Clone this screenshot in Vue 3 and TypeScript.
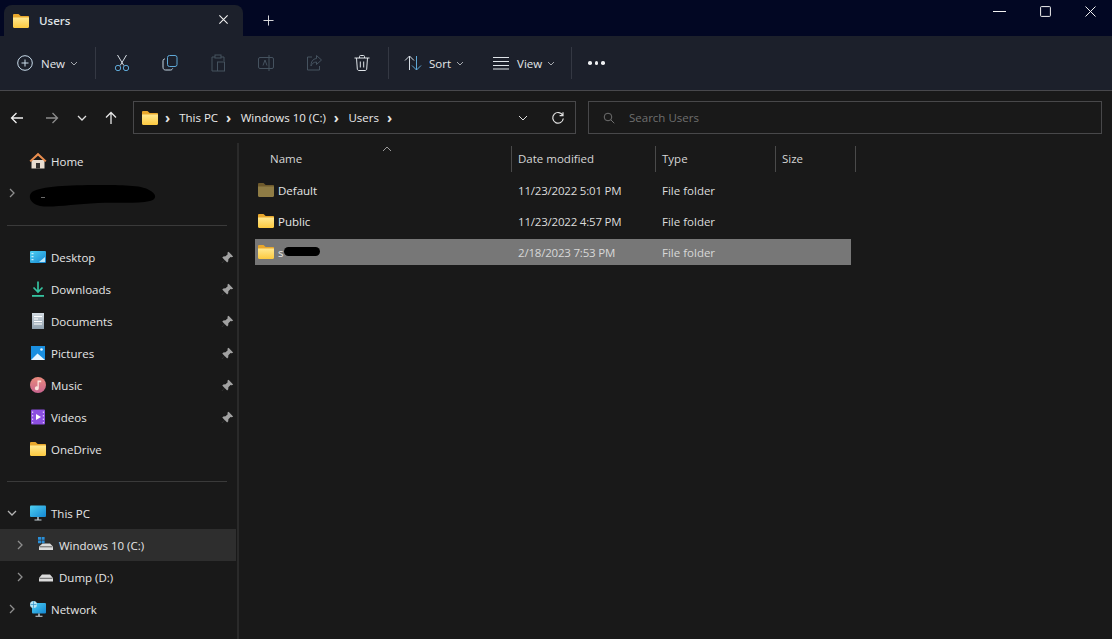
<script setup lang="ts">
interface NavItem {
  label: string;
  icon: string;
  pinned?: boolean;
  chevron?: 'right' | 'down';
  nested?: boolean;
  active?: boolean;
  divider?: boolean;
  redacted?: boolean;
}

interface FileRow {
  name: string;
  modified: string;
  type: string;
  icon: string;
  selected?: boolean;
}

const quickAccess: NavItem[] = [
  { label: 'Home', icon: 'home' },
  { label: '', icon: '', chevron: 'right', redacted: true },
  { label: '', icon: '', divider: true },
  { label: 'Desktop', icon: 'desktop', pinned: true },
  { label: 'Downloads', icon: 'downloads', pinned: true },
  { label: 'Documents', icon: 'documents', pinned: true },
  { label: 'Pictures', icon: 'pictures', pinned: true },
  { label: 'Music', icon: 'music', pinned: true },
  { label: 'Videos', icon: 'videos', pinned: true },
  { label: 'OneDrive', icon: 'folder' },
  { label: '', icon: '', divider: true },
  { label: 'This PC', icon: 'pc', chevron: 'down' },
  { label: 'Windows 10 (C:)', icon: 'drive-c', chevron: 'right', nested: true, active: true },
  { label: 'Dump (D:)', icon: 'drive', chevron: 'right', nested: true },
  { label: 'Network', icon: 'network', chevron: 'right' },
];

const files: FileRow[] = [
  { name: 'Default', modified: '11/23/2022 5:01 PM', type: 'File folder', icon: 'folder-dim' },
  { name: 'Public', modified: '11/23/2022 4:57 PM', type: 'File folder', icon: 'folder' },
  { name: 's', modified: '2/18/2023 7:53 PM', type: 'File folder', icon: 'folder', selected: true },
];

const crumbs = ['This PC', 'Windows 10 (C:)', 'Users'];
</script>

<template>
  <div class="explorer">
    <svg class="sprite" aria-hidden="true">
      <defs>
        <linearGradient id="folder-front" x1="0" y1="0" x2="0" y2="1">
          <stop offset="0" stop-color="#ffe88f" />
          <stop offset="1" stop-color="#fcc93f" />
        </linearGradient>
        <linearGradient id="screen" x1="0" y1="0" x2="1" y2="1">
          <stop offset="0" stop-color="#4fd0f2" />
          <stop offset="1" stop-color="#1386d2" />
        </linearGradient>
        <linearGradient id="doc" x1="0" y1="0" x2="0" y2="1">
          <stop offset="0" stop-color="#d3dbe2" />
          <stop offset="1" stop-color="#8fa0ad" />
        </linearGradient>
        <linearGradient id="music" x1="0" y1="0" x2="0" y2="1">
          <stop offset="0" stop-color="#e98a7c" />
          <stop offset="1" stop-color="#c9658f" />
        </linearGradient>
      </defs>
      <symbol id="i-folder" viewBox="0 0 18 16">
        <path d="M1 2.200C1 1.500 1.500 1 2.200 1h4.300l2.200 2H16c.6 0 1 .4 1 1v2H1z" fill="#e8a72c" />
        <path d="M1 4.600h15.900c.1 0 .1 0 .1.1v9.100c0 .7-.5 1.200-1.200 1.200H2.200C1.500 15 1 14.500 1 13.800z" fill="url(#folder-front)" />
      </symbol>
      <symbol id="i-folder-dim" viewBox="0 0 18 16">
        <path d="M1 2.200C1 1.500 1.500 1 2.200 1h4.300l2.200 2H16c.6 0 1 .4 1 1v2H1z" fill="#6e5a2c" />
        <path d="M1 4.600h16v9.200c0 .7-.5 1.200-1.200 1.200H2.200C1.500 15 1 14.500 1 13.800z" fill="#8f7c45" />
      </symbol>
      <symbol id="i-home" viewBox="0 0 18 18">
        <path d="M2.500 8h13v8.500h-13z" fill="#e9ddd0" />
        <path d="M9 .8 .5 8.800l1.400 1.300L9 3.800l7.100 6.300 1.400-1.300z" fill="#e98d4e" />
        <path d="M7 11h4v5.500H7z" fill="#33302e" />
      </symbol>
      <symbol id="i-desktop" viewBox="0 0 18 16">
        <rect x="1" y="2" width="16" height="12" rx="1" fill="url(#screen)" />
        <path d="M2.500 4h2v1.200h-2zM2.500 7h2v1.200h-2zM2.500 10h2v1.200h-2zM10 13l6-5v5z" fill="#d7f5ff" opacity=".85" />
      </symbol>
      <symbol id="i-downloads" viewBox="0 0 18 18">
        <path d="M9 1.500v10M4.500 7.500 9 12l4.500-4.500" fill="none" stroke="#35c2a0" stroke-width="1.700" />
        <rect x="3" y="15" width="12" height="1.800" fill="#35c2a0" />
      </symbol>
      <symbol id="i-documents" viewBox="0 0 18 18">
        <rect x="3" y="1" width="12" height="16" fill="url(#doc)" />
        <path d="M5 4.500h8M5 7h4M5 9.500h8M5 12h8" stroke="#fff" stroke-width="1.100" />
      </symbol>
      <symbol id="i-pictures" viewBox="0 0 18 18">
        <rect x="2" y="2" width="14" height="14" fill="#1a8fe0" />
        <path d="M2 16 8.500 9.500 16 16z" fill="#e8f6ff" />
        <circle cx="12.500" cy="5.500" r="1.300" fill="#e8f6ff" />
      </symbol>
      <symbol id="i-music" viewBox="0 0 18 18">
        <circle cx="9" cy="9" r="8" fill="url(#music)" />
        <path d="M8.500 4.500h3.700v1.800H9.800v6a2 2 0 1 1-1.300-1.900z" fill="#fbe3dc" />
      </symbol>
      <symbol id="i-videos" viewBox="0 0 18 18">
        <rect x="2" y="1.500" width="14" height="15" rx="1" fill="#8c4fe0" />
        <path d="M7 6v6l5-3z" fill="#fff" />
        <path d="M3 3.500h1.200v1.500H3zM3 7h1.200v1.500H3zM3 10.500h1.200V12H3zM3 14h1.200v1.200H3zM13.800 3.500H15v1.500h-1.200zM13.800 7H15v1.500h-1.200zM13.800 10.500H15V12h-1.200zM13.800 14H15v1.200h-1.200z" fill="#d9c3fa" />
      </symbol>
      <symbol id="i-pc" viewBox="0 0 18 18">
        <rect x="1" y="1.500" width="16" height="11.500" rx="1" fill="url(#screen)" />
        <path d="M8.300 13h1.400v2.500H8.300zM5.500 15.500h7v1h-7z" fill="#c8d4da" />
      </symbol>
      <symbol id="i-network" viewBox="0 0 18 18">
        <rect x="3" y="3" width="14" height="10.500" rx="1" fill="url(#screen)" />
        <path d="M9.300 13.500h1.400v2.300H9.300zM6.500 15.800h7v1h-7z" fill="#c8d4da" />
        <circle cx="4.500" cy="4.500" r="3.500" fill="#b6e6f5" />
        <path d="M1.500 4.500h6M4.500 1.200v6.600" stroke="#2c8fc5" stroke-width=".7" />
      </symbol>
      <symbol id="i-drive" viewBox="0 0 18 18">
        <path d="M5 6.500h8l3 3.500v3.500H2V10z" fill="#dcdcdc" />
        <path d="M2.500 10.300h13" stroke="#444" stroke-width=".8" />
      </symbol>
      <symbol id="i-drive-c" viewBox="0 0 18 18">
        <path d="M5.500 7.500h7.500l3 3v3.500H2v-3.500z" fill="#dcdcdc" />
        <path d="M2.500 10.800h13" stroke="#444" stroke-width=".8" />
        <path d="M1 1h3v2.800H1zM4.600 1h3v2.800h-3zM1 4.400h3v2.800H1zM4.600 4.400h3v2.800h-3z" fill="#2a8fd8" />
      </symbol>
      <symbol id="i-pin" viewBox="0 0 12 12">
        <path d="M7 .8 11.200 5 10 5.800 8.800 5.500 6.800 7.500 6.700 9.500 5.700 10.500 3.400 8.200.9 11.100.7 11l2.600-2.800L1.200 6l1-1 2-.1 2-2-.3-1.200z" fill="#a2a2a2" />
      </symbol>
    </svg>

    <header class="titlebar">
      <div class="tab">
        <svg class="ico-17"><use href="#i-folder" /></svg>
        <span class="tab-title">Users</span>
        <svg class="tab-close" viewBox="0 0 12 12">
          <path d="M1.500 1.500l9 9M10.500 1.500l-9 9" />
        </svg>
      </div>
      <svg class="new-tab" viewBox="0 0 12 12"><path d="M6 .5v11M.5 6h11" /></svg>
      <div class="window-controls">
        <svg class="win-min" viewBox="0 0 13 11"><path d="M0 5.500h13" /></svg>
        <svg viewBox="0 0 11 11"><rect x=".6" y=".6" width="9.800" height="9.800" rx=".8" /></svg>
        <svg viewBox="0 0 11 11"><path d="M.5.5l10 10M10.500.5l-10 10" /></svg>
      </div>
    </header>

    <div class="toolbar">
      <button type="button" class="tool tool-new">
        <svg class="tool-ico" viewBox="0 0 20 20">
          <circle cx="10" cy="10" r="7.300" stroke="#c9dcec" />
          <path d="M10 6.500v7M6.500 10h7" stroke="#c9dcec" />
        </svg>
        <span>New</span>
        <svg class="caret" viewBox="0 0 8 5"><path d="M1 1l3 3 3-3" /></svg>
      </button>
      <i class="sep sep-new"></i>
      <svg class="tool-ico cmd" viewBox="0 0 20 20">
        <path d="M5.500 2 11.800 12.500M14.500 2 8.200 12.500" stroke="#d6dde4" />
        <circle cx="6" cy="15" r="2.700" stroke="#5fa9d8" />
        <circle cx="14" cy="15" r="2.700" stroke="#5fa9d8" />
      </svg>
      <svg class="tool-ico cmd" viewBox="0 0 20 20">
        <rect x="7.500" y="2.500" width="9.500" height="11" rx="2" stroke="#5fa9d8" />
        <path d="M5 6H4.500A1.800 1.800 0 0 0 3 7.800v6.400C3 16.200 4.300 17 5.500 17h5c1.300 0 2-.9 2.200-1.700" stroke="#c4d6e4" />
      </svg>
      <svg class="tool-ico cmd" viewBox="0 0 20 20">
        <path d="M7 4H4v14h5M13 4h3v4" stroke="#45525f" />
        <rect x="7" y="2" width="6" height="3" stroke="#45525f" />
        <rect x="9.500" y="9" width="7" height="9" stroke="#45525f" />
      </svg>
      <svg class="tool-ico cmd" viewBox="0 0 20 20">
        <rect x="2.500" y="4.500" width="15" height="11" rx="1.500" stroke="#45525f" />
        <path d="M13 2v16M7 12.500l2-5.500 2 5.500" stroke="#45525f" />
      </svg>
      <svg class="tool-ico cmd" viewBox="0 0 20 20">
        <path d="M8 4H3.500v13h12v-4" stroke="#45525f" />
        <path d="M12.500 2.500 17.500 7l-5 4.500V9C9 9 8 11 7 13c0-4 1.500-7 5.500-7.500z" stroke="#45525f" />
      </svg>
      <svg class="tool-ico cmd-last" viewBox="0 0 20 20">
        <path d="M2.500 5h15M7.500 5V3.500c0-.6.4-1 1-1h3c.6 0 1 .4 1 1V5M4.500 5l.8 11c.1 1 .8 1.500 1.700 1.500h6c.9 0 1.600-.5 1.700-1.500l.8-11M8.300 8.500v6M11.700 8.500v6" stroke="#dfe4e9" />
      </svg>
      <i class="sep sep-delete"></i>
      <button type="button" class="tool tool-sort">
        <svg class="tool-ico" viewBox="0 0 20 20">
          <path d="M6.500 17V3M2 7.500l4.500-4.500L11 7.500" stroke="#d6dde4" />
          <path d="M13.500 3v14M9 12.500l4.500 4.500 4.500-4.500" stroke="#5fa9d8" />
        </svg>
        <span>Sort</span>
        <svg class="caret" viewBox="0 0 8 5"><path d="M1 1l3 3 3-3" /></svg>
      </button>
      <button type="button" class="tool tool-view">
        <svg class="tool-ico" viewBox="0 0 20 20">
          <path d="M2 4.500h16M2 8.500h16M2 12.500h16M2 16h16" stroke="#dfe4e9" />
        </svg>
        <span>View</span>
        <svg class="caret" viewBox="0 0 8 5"><path d="M1 1l3 3 3-3" /></svg>
      </button>
      <i class="sep sep-view"></i>
      <div class="more"><b></b><b></b><b></b></div>
    </div>

    <div class="navbar">
      <svg class="nav-ico back" viewBox="0 0 14 14"><path d="M13 7H1.500M6.500 2 1.500 7l5 5" /></svg>
      <svg class="nav-ico fwd" viewBox="0 0 14 14"><path d="M1 7h11.500M7.500 2l5 5-5 5" /></svg>
      <svg class="nav-ico recent" viewBox="0 0 10 6"><path d="M1 1l4 4 4-4" /></svg>
      <svg class="nav-ico up" viewBox="0 0 14 14"><path d="M7 13V1.500M2 6.500l5-5 5 5" /></svg>

      <div class="address">
        <svg class="ico-17"><use href="#i-folder" /></svg>
        <span class="crumb-gt first">›</span>
        <template v-for="crumb in crumbs" :key="crumb">
          <span class="crumb">{{ crumb }}</span>
          <span class="crumb-gt">›</span>
        </template>
        <svg class="addr-caret" viewBox="0 0 10 6"><path d="M1 1l4 4 4-4" /></svg>
        <svg class="refresh" viewBox="0 0 14 14">
          <path d="M11.800 4.500A5.300 5.300 0 1 0 12.300 7.500M12 1.200v3.500H8.600" />
        </svg>
      </div>

      <div class="search">
        <svg class="search-ico" viewBox="0 0 12 12">
          <circle cx="5" cy="5" r="3.800" />
          <path d="M7.800 7.800l3.500 3.500" />
        </svg>
        <span>Search Users</span>
      </div>
    </div>

    <div class="body">
      <nav class="sidebar">
        <template v-for="(item, i) in quickAccess" :key="i">
          <hr v-if="item.divider" class="nav-divider" />
          <div v-else class="nav-row" :class="{ nested: item.nested, active: item.active }">
            <svg v-if="item.chevron === 'right'" class="nav-chevron" viewBox="0 0 6 10">
              <path d="M1 1l4 4-4 4" />
            </svg>
            <svg v-if="item.chevron === 'down'" class="nav-chevron-down" viewBox="0 0 10 6">
              <path d="M1 1l4 4 4-4" />
            </svg>
            <svg v-if="item.icon" class="nav-icon"><use :href="'#i-' + item.icon" /></svg>
            <span class="nav-label">{{ item.label }}</span>
            <svg v-if="item.pinned" class="pin"><use href="#i-pin" /></svg>
            <svg v-if="item.redacted" class="blob" viewBox="0 0 128 24">
              <path d="M3 8C12 2 40 1 70 1c22 0 42 0 50 5 8 4 8 9 1 11-14 3-34 1-52 2-24 1-46 5-58 3C2 20-2 13 3 8z" fill="#000" />
              <path d="M12 13.500h4" stroke="#6a6a6a" stroke-width="1" />
            </svg>
          </div>
        </template>
      </nav>

      <main class="files">
        <svg class="sort-arrow" viewBox="0 0 10 6"><path d="M1 5l4-4 4 4" /></svg>
        <div class="col-head">
          <span class="col">Name</span>
          <span class="col">Date modified</span>
          <span class="col">Type</span>
          <span class="col">Size</span>
        </div>
        <div class="file-list">
          <div v-for="file in files" :key="file.modified" class="file-row" :class="{ selected: file.selected }">
            <div class="file-name">
              <svg class="file-icon"><use :href="'#i-' + file.icon" /></svg>
              <span>{{ file.name }}</span>
              <i v-if="file.selected" class="scribble"></i>
            </div>
            <span class="file-date">{{ file.modified }}</span>
            <span class="file-type">{{ file.type }}</span>
          </div>
        </div>
      </main>
    </div>
  </div>
</template>

<style scoped>
.explorer {
  width: 1112px;
  height: 639px;
  display: flex;
  flex-direction: column;
  overflow: hidden;
  background: #191919;
  color: #e4e4e4;
  font-family: 'Open Sans', 'Noto Sans', sans-serif;
  font-size: 11.500px;
  position: relative;
}

.sprite {
  position: absolute;
  width: 0;
  height: 0;
}

.titlebar {
  height: 36px;
  flex: none;
  display: flex;
  align-items: flex-end;
  background: #020723;
  padding-left: 4px;
}

.tab {
  width: 239px;
  height: 31px;
  background: #1c202b;
  border-radius: 8px 8px 0 0;
  display: flex;
  align-items: center;
  padding: 0 14px 0 8px;
  box-sizing: border-box;
}

.ico-17 {
  width: 18px;
  height: 16px;
  flex: none;
}

.tab-title {
  margin-left: 9px;
  font-weight: 600;
  color: #dfe2e6;
  flex: 1;
}

.tab-close {
  width: 11px;
  height: 11px;
  fill: none;
  stroke: #f0f0f0;
  stroke-width: 1.200;
  margin-bottom: 2px;
}

.new-tab {
  width: 11px;
  height: 11px;
  margin: 0 0 10px 20px;
  fill: none;
  stroke: #e8e8e8;
  stroke-width: 1;
}

.window-controls {
  margin-left: auto;
  align-self: flex-start;
  display: flex;
  gap: 34px;
  padding: 6px 16px 0 0;
}

.window-controls svg {
  width: 11px;
  height: 11px;
  fill: none;
  stroke: #f2f2f2;
  stroke-width: 1;
}

.window-controls .win-min {
  width: 13px;
}

.toolbar {
  height: 54px;
  flex: none;
  display: flex;
  align-items: center;
  background: #1c202b;
  border-bottom: 1px solid #48484c;
  box-sizing: content-box;
  padding-left: 15px;
}

.tool {
  display: flex;
  align-items: center;
  background: none;
  border: 0;
  padding: 0;
  font: inherit;
  color: #e4e7ea;
}

.tool-ico {
  width: 20px;
  height: 20px;
  flex: none;
  fill: none;
  stroke-width: 1;
}

.tool span {
  margin-left: 6px;
}

.caret {
  width: 8px;
  height: 5px;
  margin-left: 5px;
  fill: none;
  stroke: #a4a8ae;
  stroke-width: 1;
}

.sep {
  width: 1px;
  height: 32px;
  background: #343843;
  flex: none;
}

.sep-new {
  margin: 0 16px 0 17px;
}

.cmd {
  margin-right: 28px;
}

.sep-delete {
  margin: 0 14px 0 16px;
}

.tool-view {
  margin-left: 27px;
}

.sep-view {
  margin-left: 16px;
}

.more {
  display: flex;
  gap: 3px;
  margin-left: 16px;
}

.more b {
  width: 3.500px;
  height: 3.500px;
  border-radius: 50%;
  background: #eeeff1;
}

.navbar {
  height: 52px;
  flex: none;
  display: flex;
  align-items: center;
  padding: 1px 10px 0 0;
  box-sizing: border-box;
  background: #191919;
}

.nav-ico {
  fill: none;
  stroke-width: 1.300;
  flex: none;
}

.back {
  width: 14px;
  height: 14px;
  margin-left: 10px;
  stroke: #f0f0f0;
}

.fwd {
  width: 14px;
  height: 14px;
  margin-left: 21px;
  stroke: #8c8c8c;
}

.recent {
  width: 10px;
  height: 6px;
  margin-left: 18px;
  stroke: #e0e0e0;
}

.up {
  width: 14px;
  height: 14px;
  margin-left: 17px;
  stroke: #e6e6e6;
}

.address {
  width: 443px;
  height: 33px;
  margin-left: 15px;
  border: 1px solid #48484a;
  box-sizing: border-box;
  display: flex;
  align-items: center;
  padding-left: 7px;
}

.crumb {
  color: #eaeaea;
}

.crumb-gt {
  margin: 0 9.500px 0 8px;
  font-size: 14px;
  font-weight: 700;
  line-height: 1;
  color: #e6e6e6;
}

.crumb-gt.first {
  margin-left: 6px;
  margin-right: 9px;
}

.addr-caret {
  width: 10px;
  height: 6px;
  margin-left: auto;
  fill: none;
  stroke: #e0e0e0;
  stroke-width: 1;
}

.refresh {
  width: 14px;
  height: 14px;
  margin: 0 10px 0 23px;
  fill: none;
  stroke: #e0e0e0;
  stroke-width: 1.200;
}

.search {
  width: 514px;
  height: 33px;
  margin-left: 12px;
  border: 1px solid #48484a;
  box-sizing: border-box;
  display: flex;
  align-items: center;
  padding-left: 14px;
  color: #6f6f6f;
}

.search-ico {
  width: 12px;
  height: 12px;
  margin-right: 14px;
  fill: none;
  stroke: #6f6f6f;
  stroke-width: 1;
}

.body {
  flex: 1;
  display: flex;
  min-height: 0;
}

.sidebar {
  width: 239px;
  flex: none;
  box-sizing: border-box;
  border-right: 2px solid #2a2a2a;
  padding-top: 2px;
}

.nav-row {
  height: 32px;
  width: 236px;
  position: relative;
  display: flex;
  align-items: center;
  padding-left: 29px;
  box-sizing: border-box;
}

.nav-row.nested {
  padding-left: 37px;
}

.nav-row.active {
  background: #2e2e2e;
}

.nav-icon {
  width: 18px;
  height: 18px;
  flex: none;
}

.nav-label {
  margin-left: 4px;
  color: #e6e6e6;
}

.nav-chevron {
  position: absolute;
  left: 9px;
  width: 6px;
  height: 10px;
  fill: none;
  stroke: #8e8e8e;
  stroke-width: 1.300;
}

.nav-chevron-down {
  position: absolute;
  left: 7px;
  width: 10px;
  height: 6px;
  fill: none;
  stroke: #b4b4b4;
  stroke-width: 1.300;
}

.nested .nav-chevron {
  left: 17px;
}

.pin {
  position: absolute;
  left: 221px;
  top: 10px;
  width: 13px;
  height: 13px;
}

.blob {
  position: absolute;
  left: 29px;
  top: 7px;
  width: 128px;
  height: 24px;
}

.nav-divider {
  height: 1px;
  border: 0;
  margin: 16px 10px 15px 7px;
  background: #3a3a3a;
}

.files {
  flex: 1;
  position: relative;
}

.sort-arrow {
  position: absolute;
  left: 143px;
  top: 3px;
  width: 10px;
  height: 6px;
  fill: none;
  stroke: #9a9a9a;
  stroke-width: 1;
}

.col-head {
  display: grid;
  grid-template-columns: 272px 144px 120px 81px;
  height: 26px;
  margin-top: 3px;
  color: #d6d6d6;
}

.col {
  display: flex;
  align-items: center;
  padding: 0 0 2px 6px;
  border-left: 1px solid #4a4a4a;
}

.col:first-child {
  padding-left: 31px;
  border-left: 0;
}

.col:last-child {
  border-right: 1px solid #4a4a4a;
}

.file-list {
  margin: 5px 0 0 16px;
  display: flex;
  flex-direction: column;
  gap: 5px;
}

.file-row {
  width: 596px;
  height: 26px;
  display: grid;
  grid-template-columns: 256px 144px 1fr;
  align-items: center;
  color: #dcdcdc;
}

.file-row.selected {
  background: #777777;
  color: #d8d8d8;
}

.file-name {
  display: flex;
  align-items: center;
  position: relative;
  padding-left: 2px;
  color: #e6e6e6;
}

.file-icon {
  width: 18px;
  height: 16px;
  margin-right: 3px;
}

.file-date {
  letter-spacing: -0.2px;
}

.file-date,
.file-type {
  padding-left: 7px;
}

.scribble {
  position: absolute;
  left: 29px;
  top: 3px;
  width: 36px;
  height: 9px;
  background: #000;
  border-radius: 5px;
}
</style>

<style>
html,
body {
  background: #191919;
}
</style>
